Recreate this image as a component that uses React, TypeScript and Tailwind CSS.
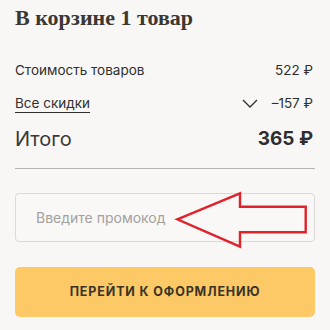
import React from 'react';

const sans = { fontFamily: 'Inter, "Noto Sans", sans-serif' };

const App: React.FC = () => {
  return (
    <div className="w-[330px] h-[330px] bg-[#f8f7f5] px-[15px] pt-[4px] text-[#2f2f2f]" style={sans}>
      <h1 className="text-[22px] leading-[28px] font-bold text-[#3b3733] font-['Liberation_Serif',serif]">
        В корзине 1 товар
      </h1>

      <div className="mt-[28px] h-[20px] flex items-center justify-between text-[13.5px]">
        <span>Стоимость товаров</span>
        <span className="mr-[2px]">522 ₽</span>
      </div>

      <div className="mt-[13px] h-[20px] flex items-center justify-between text-[13.5px]">
        <span className="underline underline-offset-[4px] decoration-1">Все скидки</span>
        <div className="flex items-center gap-[14px] mr-[2px]">
          <svg width="16" height="9" viewBox="0 0 16 9" fill="none" stroke="#2f2f2f" strokeWidth="1.3">
            <path d="M1 1l7 7 7-7" />
          </svg>
          <span>–157 ₽</span>
        </div>
      </div>

      <div className="mt-[13px] h-[26px] flex items-center justify-between">
        <span className="text-[20px] text-[#3a3a3a]">Итого</span>
        <span className="text-[19px] font-bold mr-[2px]">365 ₽</span>
      </div>

      <div className="mt-[16px] h-px bg-[#b5b3b0]" />

      <div className="relative mt-[24px]">
        <div className="h-[49px] rounded-[4px] border border-[#dcdad7] bg-[#f9f8f7] flex items-center pl-[20px] text-[14px] text-[#a3a19e]">
          Введите промокод
        </div>
        <svg
          className="absolute left-0 top-0 overflow-visible pointer-events-none"
          width="298"
          height="49"
          viewBox="0 0 298 49"
          fill="none"
        >
          <polygon
            points="162.3,26.3 225,0.3 225,13.7 290.7,13.7 290.7,39.3 225,39.3 225,53.7"
            stroke="#e0232b"
            strokeWidth="2.4"
            strokeLinejoin="miter"
          />
        </svg>
      </div>

      <button className="mt-[25px] w-full h-[50px] rounded-[5px] bg-[#fcc966] text-[12.5px] font-bold tracking-[0.07em] text-[#3a3326] uppercase">
        Перейти к оформлению
      </button>
    </div>
  );
};

export default App;
